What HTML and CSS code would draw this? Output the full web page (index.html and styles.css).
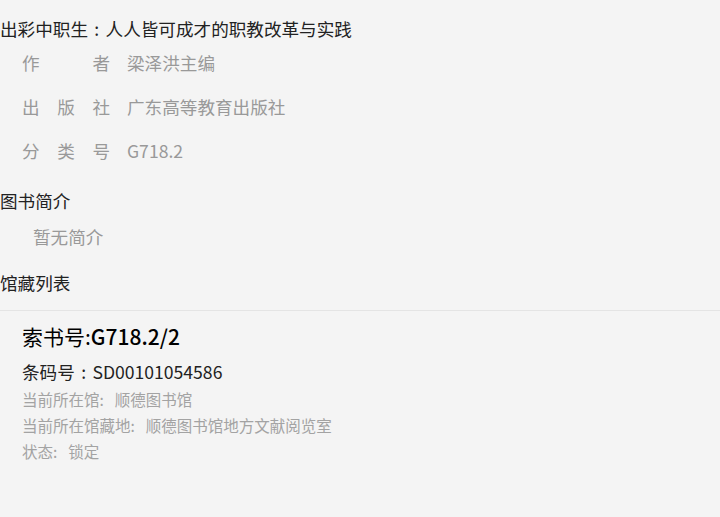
FILE: index.html
```html
<!DOCTYPE html>
<html lang="zh-CN">
<head>
<meta charset="utf-8">
<title>出彩中职生</title>
<link rel="stylesheet" href="styles.css">
</head>
<body>
<div class="page">
  <h1 class="title">出彩中职生<span class="fw">:</span>人人皆可成才的职教改革与实践</h1>
  <ul class="info">
    <li class="row"><span class="label"><span>作</span><span>者</span></span><span class="value">梁泽洪主编</span></li>
    <li class="row"><span class="label"><span>出</span><span>版</span><span>社</span></span><span class="value">广东高等教育出版社</span></li>
    <li class="row"><span class="label"><span>分</span><span>类</span><span>号</span></span><span class="value">G718.2</span></li>
  </ul>
  <h2 class="section">图书简介</h2>
  <p class="intro">暂无简介</p>
  <h2 class="section section-holdings">馆藏列表</h2>
  <div class="holdings">
    <div class="item">
      <div class="callno">索书号:<span class="latin">G718.2/2</span></div>
      <div class="barcode">条码号<span class="fw">:</span>SD00101054586</div>
      <div class="meta">当前所在馆:&nbsp; 顺德图书馆</div>
      <div class="meta">当前所在馆藏地:&nbsp; 顺德图书馆地方文献阅览室</div>
      <div class="meta">状态:&nbsp; 锁定</div>
    </div>
  </div>
</div>
</body>
</html>
```

FILE: styles.css
```css
html, body {
  margin: 0;
  padding: 0;
  background: #f4f4f4;
}
body {
  font-family: "Noto Sans CJK SC", "Noto Sans", sans-serif;
  color: #222;
}
.page {
  display: flex;
  flex-direction: column;
}
.fw {
  display: inline-block;
  width: 1em;
  text-align: center;
}
.title {
  margin: 0;
  padding-top: 19px;
  font-size: 17.6px;
  font-weight: normal;
  line-height: 20px;
  color: #222;
  white-space: nowrap;
}
.info {
  list-style: none;
  margin: 1px 0 0;
  padding: 0 0 0 22px;
}
.row {
  display: flex;
  align-items: center;
  gap: 17px;
  height: 44px;
  font-size: 17.6px;
  color: #999;
}
.label {
  display: flex;
  justify-content: space-between;
  width: 88px;
}
.section {
  margin: 19px 0 0;
  font-size: 17.6px;
  font-weight: normal;
  line-height: 20px;
  color: #222;
}
.intro {
  margin: 16px 0 0;
  padding-left: 33px;
  font-size: 17.6px;
  line-height: 20px;
  color: #999;
}
.section-holdings {
  margin-top: 26px;
}
.holdings {
  margin-top: 17px;
  border-top: 1px solid #e4e4e4;
}
.item {
  padding: 12px 0 0 22px;
  display: flex;
  flex-direction: column;
}
.callno {
  font-size: 21px;
  line-height: 26px;
  color: #000;
}
.callno .latin {
  font-weight: 500;
}
.barcode {
  margin-top: 11px;
  font-size: 17.6px;
  line-height: 24px;
  color: #222;
}
.meta {
  font-size: 15.5px;
  line-height: 26px;
  color: #a3a3a3;
  word-spacing: 2px;
}
.barcode + .meta {
  margin-top: 2px;
}
```
